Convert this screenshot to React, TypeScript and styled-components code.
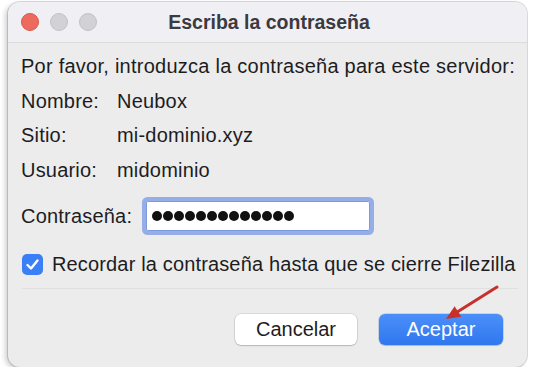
import styled, {createGlobalStyle} from 'styled-components'

// ── Global ──

const GlobalStyle = createGlobalStyle`
  html, body {
    margin: 0;
    padding: 0;
    background: #ffffff;
  }
  body {
    font-family: 'Liberation Sans', Arial, sans-serif;
    color: #1d1d1f;
  }
`

// ── Styled Components ──

const Page = styled.div`
  padding: 2px 0 0 8px;
`

const Window = styled.div`
  position: relative;
  width: 519px;
  height: 365px;
  box-sizing: border-box;
  border-radius: 12px;
  background: #ececec;
  overflow: hidden;
  box-shadow:
    0 0 0 1px rgba(0, 0, 0, 0.14),
    -3px 2px 5px rgba(0, 0, 0, 0.18);
`

const TitleBar = styled.div`
  display: grid;
  grid-template-columns: 1fr auto 1fr;
  align-items: center;
  height: 40px;
  padding: 0 10px 0 13px;
  background: #f0eff3;
  border-bottom: 1px solid #dcdbdf;
`

const Lights = styled.div`
  display: flex;
  gap: 11px;
`

const Light = styled.span<{$color: string; $edge: string}>`
  width: 18px;
  height: 18px;
  border-radius: 50%;
  box-sizing: border-box;
  background: ${(p) => p.$color};
  border: 1px solid ${(p) => p.$edge};
`

const Title = styled.div`
  font-size: 19.5px;
  font-weight: 700;
  color: #3b3a3e;
`

const Body = styled.div`
  padding: 6px 9px 0 13px;
  font-size: 20px;
  letter-spacing: 0.2px;
`

const Line = styled.div`
  line-height: 34.5px;
  white-space: nowrap;
  letter-spacing: 0.25px;
`

const InfoRow = styled.div`
  display: grid;
  grid-template-columns: 96px 1fr;
  line-height: 34.5px;
`

const PasswordRow = styled.div`
  display: flex;
  align-items: center;
  gap: 14px;
  margin-top: 10px;
  height: 38px;
`

const Field = styled.div`
  display: flex;
  align-items: center;
  gap: 1px;
  width: 224px;
  height: 30px;
  margin: 4px 0;
  padding-left: 6px;
  box-sizing: border-box;
  background: #ffffff;
  border-radius: 2px;
  box-shadow:
    inset 0 0 0 1px #7d9ade,
    0 0 0 4px #96aee8;
`

const Dot = styled.span`
  width: 10px;
  height: 10px;
  border-radius: 50%;
  background: #111;
`

const CheckRow = styled.label`
  display: flex;
  align-items: center;
  gap: 9px;
  margin-top: 19px;
  height: 21px;
  padding-left: 1px;
  white-space: nowrap;
  letter-spacing: 0.15px;
`

const CheckBox = styled.span`
  display: flex;
  align-items: center;
  justify-content: center;
  width: 21px;
  height: 21px;
  border-radius: 5px;
  background: #3a7ff5;
`

const Separator = styled.div`
  height: 1px;
  margin: 13px 0 0 1px;
  background: #e0e0e0;
`

const ButtonRow = styled.div`
  display: flex;
  justify-content: flex-end;
  gap: 22px;
  margin-top: 25px;
  padding-right: 15px;
`

const Button = styled.button<{$primary?: boolean}>`
  height: 31px;
  width: ${(p) => (p.$primary ? '124px' : '122px')};
  border: none;
  border-radius: 6px;
  font-family: inherit;
  font-size: 20px;
  color: ${(p) => (p.$primary ? '#ffffff' : '#1d1d1f')};
  background: ${(p) => (p.$primary ? 'linear-gradient(#4b8ff8, #2f77f0)' : '#ffffff')};
  box-shadow: ${(p) =>
    p.$primary
      ? '0 0 0 0.5px rgba(0, 60, 180, 0.3), 0 1px 1px rgba(0, 0, 0, 0.12)'
      : '0 0 0 0.5px rgba(0, 0, 0, 0.16), 0 1px 1.5px rgba(0, 0, 0, 0.16)'};
  cursor: pointer;
`

const Overlay = styled.svg`
  position: absolute;
  inset: 0;
  pointer-events: none;
`

// ── Component ──

export default function App() {
  return (
    <>
      <GlobalStyle />
      <Page>
        <Window>
          <TitleBar>
            <Lights>
              <Light $color="#ec6a5e" $edge="#d9574b" />
              <Light $color="#d2d1d5" $edge="#c2c1c6" />
              <Light $color="#d2d1d5" $edge="#c2c1c6" />
            </Lights>
            <Title>Escriba la contraseña</Title>
            <span />
          </TitleBar>

          <Body>
            <Line>Por favor, introduzca la contraseña para este servidor:</Line>
            <InfoRow>
              <span>Nombre:</span>
              <span>Neubox</span>
            </InfoRow>
            <InfoRow>
              <span>Sitio:</span>
              <span>mi-dominio.xyz</span>
            </InfoRow>
            <InfoRow>
              <span>Usuario:</span>
              <span>midominio</span>
            </InfoRow>

            <PasswordRow>
              <span>Contraseña:</span>
              <Field>
                {Array.from({length: 13}).map((_, i) => (
                  <Dot key={i} />
                ))}
              </Field>
            </PasswordRow>

            <CheckRow>
              <CheckBox>
                <svg width="15" height="15" viewBox="0 0 15 15">
                  <polyline
                    points="2.5,8 6,11.5 12.5,3.5"
                    fill="none"
                    stroke="#fff"
                    strokeWidth="2.4"
                    strokeLinecap="round"
                    strokeLinejoin="round"
                  />
                </svg>
              </CheckBox>
              Recordar la contraseña hasta que se cierre Filezilla
            </CheckRow>

            <Separator />

            <ButtonRow>
              <Button type="button">Cancelar</Button>
              <Button type="button" $primary>
                Aceptar
              </Button>
            </ButtonRow>
          </Body>

          {/* red annotation arrow pointing at Aceptar */}
          <Overlay width="519" height="365">
            <line x1="489" y1="285" x2="450" y2="309.6" stroke="#c8312b" strokeWidth="3" strokeLinecap="round" />
            <polygon points="438,317 453.3,314.8 446.6,304.2" fill="#c8312b" />
          </Overlay>
        </Window>
      </Page>
    </>
  )
}
